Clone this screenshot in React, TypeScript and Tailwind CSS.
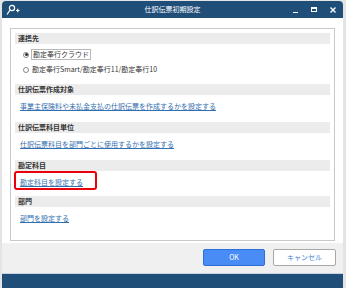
import React from "react";

const font = { fontFamily: '"Noto Sans CJK JP", "Noto Sans", sans-serif' };

function SectionHeader({ label }: { label: string }) {
  return (
    <div className="h-[11px] bg-[#ececec] pl-[3px] flex items-center text-[7px] font-bold text-[#333] leading-none">
      {label}
    </div>
  );
}

function LinkRow({ label, last }: { label: string; last?: boolean }) {
  return (
    <div className={`mt-[4px] h-[14px] flex items-center pl-[5px] ${last ? "" : "mb-[9px]"}`}>
      <a className="text-[7px] leading-none text-[#3470b0] underline underline-offset-1 cursor-pointer">{label}</a>
    </div>
  );
}

function Radio({ checked }: { checked?: boolean }) {
  return (
    <span className="w-[6px] h-[6px] rounded-full border border-[#8a8a8a] bg-white flex items-center justify-center">
      {checked && <span className="w-[3px] h-[3px] rounded-full bg-[#333]" />}
    </span>
  );
}

export default function App() {
  return (
    <div className="w-[346px] h-[288px] bg-[#e4e4e4] pt-[1px] px-[2px] overflow-hidden" style={font}>
      <div className="w-[341px] h-[287px] flex flex-col bg-white rounded-t-[4px] overflow-hidden">
        {/* title bar */}
        <div className="h-[17px] bg-[#1f4e79] flex items-center relative text-white">
          <svg className="ml-[4px]" width="14" height="12" viewBox="0 0 14 12" fill="none" stroke="white" strokeWidth="1.2">
            <circle cx="6" cy="4" r="2.6" />
            <path d="M4.2 5.8 L1 10.5" />
            <path d="M10 6.5 H13.5 M11.75 4.8 V8.2" />
          </svg>
          <div className="absolute left-0 right-0 text-center text-[7px] leading-none">仕訳伝票初期設定</div>
          <div className="ml-auto flex items-center gap-[13px] pr-[7px]">
            <span className="w-[5px] h-[1.5px] bg-white mt-[6px]" />
            <span className="w-[6px] h-[5px] border border-white border-t-2" />
            <svg width="6" height="6" viewBox="0 0 6 6" stroke="white" strokeWidth="1.4">
              <path d="M0.5 0.5 L5.5 5.5 M5.5 0.5 L0.5 5.5" />
            </svg>
          </div>
        </div>

        {/* body */}
        <div className="pt-[10px] px-[8px] pb-[2px] bg-white">
          <div className="h-[213px] border border-[#c9c9c9] px-[4px] pt-[4px]">
            <SectionHeader label="連携先" />
            <div className="mt-[3px] h-[15px] flex items-center pl-[8px] gap-[2px]">
              <Radio checked />
              <span className="text-[7px] leading-none text-[#333] border border-[#b8b8b8] px-[1px] py-[1px]">勘定奉行クラウド</span>
            </div>
            <div className="h-[15px] mb-[7px] flex items-center pl-[8px] gap-[3px]">
              <Radio />
              <span className="text-[7px] leading-none text-[#333]">勘定奉行Smart/勘定奉行11/勘定奉行10</span>
            </div>

            <SectionHeader label="仕訳伝票作成対象" />
            <LinkRow label="事業主保険料や未払金支払の仕訳伝票を作成するかを設定する" />

            <SectionHeader label="仕訳伝票科目単位" />
            <LinkRow label="仕訳伝票科目を部門ごとに使用するかを設定する" />

            <SectionHeader label="勘定科目" />
            <div className="mt-[4px] h-[14px] mb-[7px] flex items-center pl-[5px] relative">
              <a className="text-[7px] leading-none text-[#3470b0] underline underline-offset-1 cursor-pointer">勘定科目を設定する</a>
              <div className="absolute -left-[1px] -top-[4px] w-[83px] h-[19px] border-2 border-[#e8000b] rounded-[3px]" />
            </div>

            <SectionHeader label="部門" />
            <LinkRow label="部門を設定する" last />
          </div>
        </div>

        {/* footer */}
        <div className="h-[30px] bg-[#f0f0f0] flex justify-end gap-[8px] pt-[6px] pr-[7px]">
          <button className="w-[62px] h-[17px] bg-[#4a8cf6] border border-[#2d6fd8] rounded-[2px] text-white text-[7px] leading-none">
            OK
          </button>
          <button className="w-[63px] h-[17px] bg-white border border-[#a8a8a8] rounded-[2px] text-[#4a7fd6] text-[7px] leading-none">
            キャンセル
          </button>
        </div>

        {/* bottom bar */}
        <div className="flex-1 bg-[#1f4e79] border-t border-[#c7d3df]" />
      </div>
    </div>
  );
}
